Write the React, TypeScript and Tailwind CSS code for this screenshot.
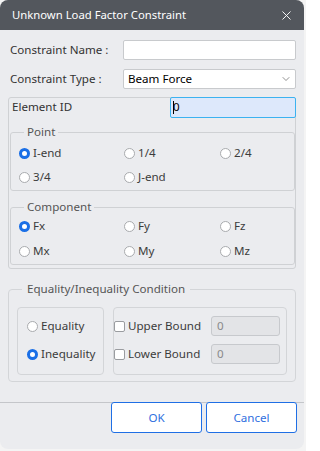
import React from 'react'
import { X, ChevronDown } from 'lucide-react'

function Radio({ checked, label }: { checked?: boolean; label: string }) {
  return (
    <div className="flex items-center gap-[3px] h-[16px] text-[#3c3c3c]">
      {checked ? (
        <span className="w-[11px] h-[11px] rounded-full border-[3.5px] border-[#1a6fe6] bg-white shrink-0" />
      ) : (
        <span className="w-[11px] h-[11px] rounded-full border border-[#a9abae] bg-white shrink-0" />
      )}
      <span>{label}</span>
    </div>
  )
}

function Check({ label }: { label: string }) {
  return (
    <div className="flex items-center gap-[3px] text-[#3c3c3c]">
      <span className="w-[11px] h-[11px] rounded-[2px] border border-[#9a9ca0] bg-white shrink-0" />
      <span>{label}</span>
    </div>
  )
}

function App() {
  return (
    <div className="w-[306px] h-[451px] bg-[#f4f4f4] flex font-['Noto_Sans',sans-serif] text-[11.6px] leading-[16px]">
      <div className="w-[304px] h-[449px] rounded-[8px] bg-[#ebecef] overflow-hidden flex flex-col">
        {/* title bar */}
        <div className="h-[30px] bg-[#53575d] flex items-center justify-between pl-[12px] pr-[10px] text-white">
          <span className="text-[11.3px]">Unknown Load Factor Constraint</span>
          <X size={15} strokeWidth={1.5} />
        </div>

        <div className="flex-1 px-[8px] text-[#333]">
          <div className="mt-[10px] h-[20px] flex items-center">
            <span className="w-[115px] pl-[2px]">Constraint Name :</span>
            <div className="w-[173px] h-[20px] bg-white border border-[#c8cacd] rounded-[2px]" />
          </div>
          <div className="mt-[9px] h-[20px] flex items-center">
            <span className="w-[115px] pl-[2px]">Constraint Type :</span>
            <div className="w-[173px] h-[20px] bg-white border border-[#c8cacd] rounded-[2px] flex items-center justify-between pl-[4px] pr-[3px] text-black">
              <span>Beam Force</span>
              <ChevronDown size={12} strokeWidth={1.3} className="text-[#555]" />
            </div>
          </div>

          {/* element box */}
          <div className="mt-[8px] w-[288px] h-[172px] border border-[#cfd1d4] rounded-[3px] flex flex-col">
            <div className="-mt-px -mr-px h-[20px] flex items-center">
              <span className="pl-[3px] text-[#333]">Element ID</span>
              <div className="ml-auto w-[126px] h-[21px] bg-[#dde8fb] border border-[#3cb2f0] rounded-[2px] flex items-center pl-[2px] text-black">
                <span className="w-px h-[13px] bg-black" />
                <span className="-ml-[1px]">0</span>
              </div>
            </div>

            <fieldset className="mt-[7px] ml-px border border-[#cfd1d4] rounded-[3px] pl-[8px] pb-[5px]">
              <legend className="ml-[5px] px-[3px] text-[#555]">Point</legend>
              <div className="mt-[5px] grid grid-cols-[105px_96px_1fr] gap-y-[8px]">
                <Radio checked label="I-end" />
                <Radio label="1/4" />
                <Radio label="2/4" />
                <Radio label="3/4" />
                <Radio label="J-end" />
              </div>
            </fieldset>

            <fieldset className="mt-[8px] ml-px border border-[#cfd1d4] rounded-[3px] pl-[8px] pb-[5px]">
              <legend className="ml-[5px] px-[3px] text-[#555]">Component</legend>
              <div className="mt-[3px] grid grid-cols-[105px_96px_1fr] gap-y-[9px]">
                <Radio checked label="Fx" />
                <Radio label="Fy" />
                <Radio label="Fz" />
                <Radio label="Mx" />
                <Radio label="My" />
                <Radio label="Mz" />
              </div>
            </fieldset>
          </div>

          {/* condition */}
          <fieldset className="mt-[12px] w-[288px] border border-[#d3d5d8] rounded-[4px] pl-[8px] pb-[6px]">
            <legend className="ml-[5px] px-[5px] text-[#555]">Equality/Inequality Condition</legend>
            <div className="mt-[10px] flex gap-[9px]">
              <div className="w-[87px] h-[68px] border border-[#d3d5d8] rounded-[4px] pl-[9px] pt-[10px] flex flex-col gap-[12px]">
                <Radio label="Equality" />
                <Radio checked label="Inequality" />
              </div>
              <div className="w-[174px] h-[68px] border border-[#d3d5d8] rounded-[4px] pt-[8px] pr-[6px] flex flex-col gap-[8px]">
                <div className="h-[20px] flex items-center">
                  <Check label="Upper Bound" />
                  <div className="ml-auto w-[69px] h-[20px] bg-[#e3e4e7] border border-[#c7c9cd] rounded-[3px] flex items-center pl-[5px] text-[#8a8a8a]">
                    0
                  </div>
                </div>
                <div className="h-[20px] flex items-center">
                  <Check label="Lower Bound" />
                  <div className="ml-auto w-[69px] h-[20px] bg-[#e3e4e7] border border-[#c7c9cd] rounded-[3px] flex items-center pl-[5px] text-[#8a8a8a]">
                    0
                  </div>
                </div>
              </div>
            </div>
          </fieldset>
        </div>

        {/* footer */}
        <div className="h-[47px] border-t border-[#c4c6ca] flex justify-end gap-[4px] pr-[7px]">
          <button className="-mt-px w-[91px] h-[31px] bg-white border border-[#1f6fe5] rounded-[3px] text-[#2f6fe0]">
            OK
          </button>
          <button className="-mt-px w-[91px] h-[31px] bg-white border border-[#1f6fe5] rounded-[3px] text-[#2f6fe0]">
            Cancel
          </button>
        </div>
      </div>
    </div>
  )
}

export default App
